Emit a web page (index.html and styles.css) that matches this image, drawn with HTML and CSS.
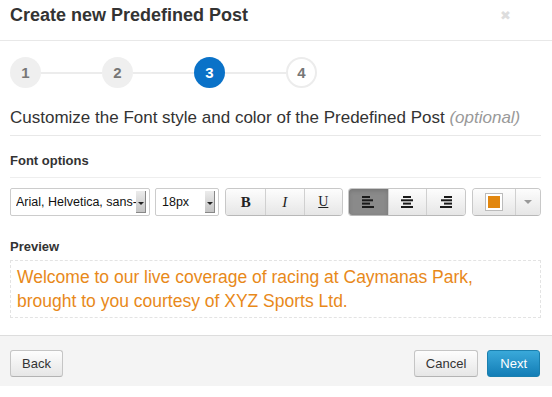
FILE: index.html
```html
<!DOCTYPE html>
<html>
<head>
<meta charset="utf-8">
<link rel="stylesheet" href="styles.css">
</head>
<body>
<div class="modal">
  <div class="modal-header">
    <h3 class="modal-title">Create new Predefined Post</h3>
    <span class="close">&#10006;</span>
  </div>
  <div class="modal-body">
    <div class="steps">
      <span class="step done">1</span>
      <span class="connector"></span>
      <span class="step done">2</span>
      <span class="connector"></span>
      <span class="step current">3</span>
      <span class="connector"></span>
      <span class="step todo">4</span>
    </div>
    <h4 class="section-title">Customize the Font style and color of the Predefined Post <em class="optional">(optional)</em></h4>
    <div class="label-row">Font options</div>
    <div class="toolbar">
      <div class="select font-select">
        <span class="select-value">Arial, Helvetica, sans-</span>
        <span class="select-arrow"></span>
      </div>
      <div class="select size-select">
        <span class="select-value">18px</span>
        <span class="select-arrow"></span>
      </div>
      <div class="btn-group">
        <button class="tb-btn glyph-b">B</button>
        <button class="tb-btn glyph-i">I</button>
        <button class="tb-btn glyph-u">U</button>
      </div>
      <div class="btn-group">
        <button class="tb-btn active">
          <svg width="14" height="12" viewBox="0 0 14 12"><rect x="1" y="0" width="8" height="2"/><rect x="1" y="3.3" width="11" height="2"/><rect x="1" y="6.6" width="8" height="2"/><rect x="1" y="10" width="12" height="2"/></svg>
        </button>
        <button class="tb-btn">
          <svg width="14" height="12" viewBox="0 0 14 12"><rect x="3" y="0" width="8" height="2"/><rect x="1" y="3.3" width="12" height="2"/><rect x="3" y="6.6" width="8" height="2"/><rect x="1" y="10" width="12" height="2"/></svg>
        </button>
        <button class="tb-btn">
          <svg width="14" height="12" viewBox="0 0 14 12"><rect x="5" y="0" width="8" height="2"/><rect x="2" y="3.3" width="11" height="2"/><rect x="5" y="6.6" width="8" height="2"/><rect x="1" y="10" width="12" height="2"/></svg>
        </button>
      </div>
      <div class="btn-group color-group">
        <button class="tb-btn swatch-btn"><span class="swatch"></span></button>
        <button class="tb-btn caret-btn"><span class="caret"></span></button>
      </div>
    </div>
    <div class="label-row preview-label">Preview</div>
    <div class="preview">Welcome to our live coverage of racing at Caymanas Park, brought to you courtesy of XYZ Sports Ltd.</div>
  </div>
  <div class="modal-footer">
    <button class="btn">Back</button>
    <div class="footer-right">
      <button class="btn">Cancel</button>
      <button class="btn btn-primary">Next</button>
    </div>
  </div>
</div>
</body>
</html>
```

FILE: styles.css
```css
* { box-sizing: border-box; }

body {
  margin: 0;
  background: #fff;
  font-family: "Liberation Sans", Arial, sans-serif;
  color: #333;
}

.modal {
  width: 552px;
}

/* header */
.modal-header {
  height: 41px;
  padding: 4px 10px 0;
  border-bottom: 1px solid #e8e8e8;
  display: flex;
  justify-content: space-between;
  align-items: flex-start;
}

.modal-title {
  margin: 0;
  font-size: 18px;
  line-height: 22px;
  font-weight: bold;
  color: #333;
}

.close {
  margin: 5px 31px 0 0;
  font-size: 13px;
  color: #ddd;
  line-height: 13px;
}

.modal-body {
  padding: 0 11px 0 10px;
}

/* wizard steps */
.steps {
  display: flex;
  align-items: center;
  margin-top: 16px;
}

.step {
  width: 31px;
  height: 31px;
  border-radius: 50%;
  display: flex;
  align-items: center;
  justify-content: center;
  font-size: 15px;
  font-weight: bold;
  color: #777;
  background: #efefef;
  flex: none;
}

.step.current {
  background: #0a72c8;
  color: #fff;
}

.step.todo {
  background: #fff;
  border: 2px solid #ececec;
}

.connector {
  width: 61px;
  height: 2px;
  background: #ececec;
}

/* section heading */
.section-title {
  margin: 18px 0 0;
  padding-bottom: 5px;
  font-size: 17px;
  line-height: 24px;
  font-weight: normal;
  color: #333;
  border-bottom: 1px solid #e8e8e8;
}

.optional {
  color: #999;
}

.label-row {
  margin-top: 16px;
  padding-bottom: 8px;
  font-size: 13px;
  line-height: 17px;
  font-weight: bold;
  color: #333;
  border-bottom: 1px solid #eee;
}

/* toolbar */
.toolbar {
  display: flex;
  margin-top: 10px;
  height: 28px;
}

.select {
  height: 28px;
  border: 1px solid #ccc;
  border-radius: 2px;
  background: #fff;
  display: flex;
  align-items: center;
  padding: 0 3px 0 6px;
  font-size: 12.5px;
  color: #111;
}

.select-value {
  flex: 1;
  min-width: 0;
  white-space: nowrap;
  overflow: hidden;
}

.select-arrow {
  width: 10px;
  height: 22px;
  background: linear-gradient(#ececec, #c4c4c4);
  border-right: 1px solid #888;
  border-bottom: 1px solid #888;
  position: relative;
  flex: none;
}

.select-arrow::after {
  content: "";
  position: absolute;
  left: 2px;
  top: 11px;
  border-left: 3px solid transparent;
  border-right: 3px solid transparent;
  border-top: 3px solid #222;
}

.font-select { width: 140px; padding-left: 5px; }
.size-select { width: 65px; margin-left: 5px; }

.btn-group {
  display: flex;
  margin-left: 6px;
  border: 1px solid #c8c8c8;
  border-bottom-color: #b8b8b8;
  border-radius: 4px;
  overflow: hidden;
}

.btn-group + .btn-group { margin-left: 5px; }
.btn-group.color-group { margin-left: 6px; }

.tb-btn {
  width: 39px;
  height: 26px;
  margin: 0;
  padding: 0;
  border: 0;
  border-left: 1px solid #d0d0d0;
  background: linear-gradient(#fdfdfd, #e6e6e6);
  display: flex;
  align-items: center;
  justify-content: center;
  font-family: "Liberation Serif", "DejaVu Serif", serif;
  font-size: 15px;
  color: #222;
}

.tb-btn:first-child { border-left: 0; }

.tb-btn svg { fill: #1a1a1a; }

.tb-btn.active {
  background: #8a8a8a;
  box-shadow: inset 0 2px 4px rgba(0, 0, 0, 0.15);
}

.glyph-b { font-weight: bold; }
.glyph-i { font-style: italic; }
.glyph-u { text-decoration: underline; font-size: 14px; }

.swatch-btn { width: 43px; }

.swatch {
  width: 18px;
  height: 18px;
  border: 1px solid #bbb;
  box-shadow: inset 0 0 0 2px #fff;
  background: #e2870f;
}

.caret-btn { width: 25px; }

.caret {
  border-left: 4px solid transparent;
  border-right: 4px solid transparent;
  border-top: 4px solid #999;
}

.preview-label {
  margin-top: 22px;
  border-bottom: 0;
  padding-bottom: 5px;
}

.preview {
  border: 1px dashed #e3e3e3;
  padding: 4px 6px 4px;
  font-family: "Liberation Sans", Arial, sans-serif;
  font-size: 17.5px;
  line-height: 24px;
  color: #e8891a;
}

/* footer */
.modal-footer {
  margin-top: 17px;
  height: 51px;
  background: #f4f4f4;
  border-top: 1px solid #ddd;
  padding: 14px 12px 0 10px;
  display: flex;
  justify-content: space-between;
  align-items: flex-start;
}

.footer-right {
  display: flex;
  gap: 9px;
}

.btn {
  height: 27px;
  padding: 0 11px;
  border: 1px solid #c5c5c5;
  border-bottom-color: #b3b3b3;
  border-radius: 3px;
  background: linear-gradient(#fdfdfd, #e6e6e6);
  font-family: "Liberation Sans", Arial, sans-serif;
  font-size: 13px;
  color: #333;
}

.btn-primary {
  border-color: #1a7fae;
  background: linear-gradient(#3aa9da, #137db6);
  color: #fff;
  padding: 0 12px;
}
```
